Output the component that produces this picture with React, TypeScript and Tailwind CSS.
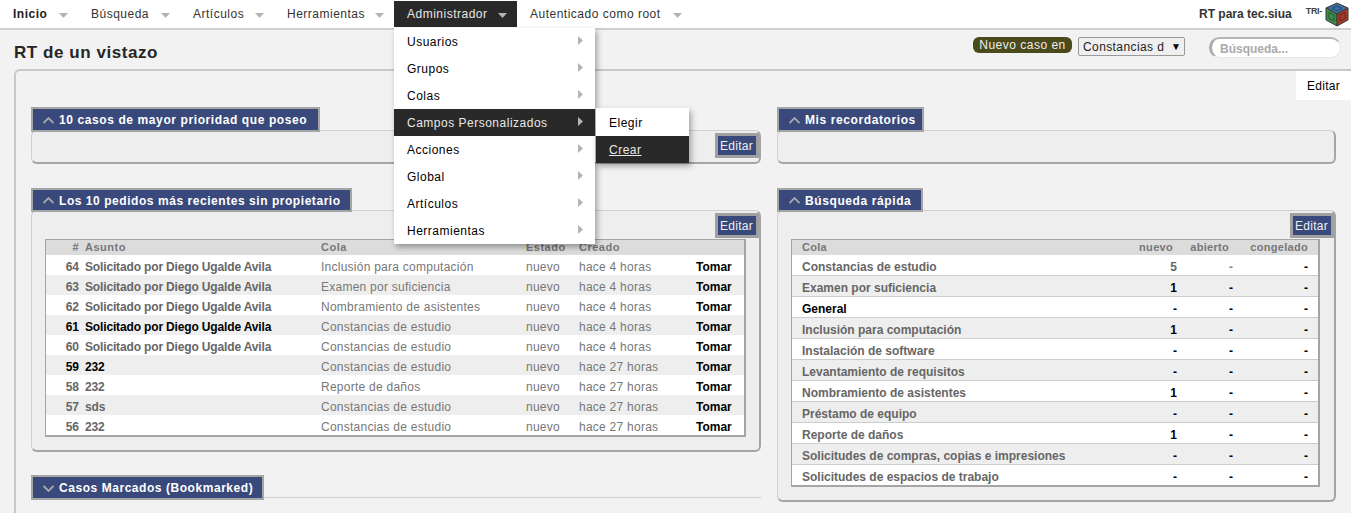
const navItems = [
  { label: 'Inicio', width: 'w-[78px]' },
  { label: 'Búsqueda', width: 'w-[102px]' },
  { label: 'Artículos', width: 'w-[94px]' },
  { label: 'Herramientas', width: 'w-[120px]' },
  { label: 'Administrador', width: 'w-[123px]' },
  { label: 'Autenticado como root', width: 'w-[175px]' },
]
const adminItems = ['Usuarios', 'Grupos', 'Colas', 'Campos Personalizados', 'Acciones', 'Global', 'Artículos', 'Herramientas']

const tickets = [
  { id: '64', subject: 'Solicitado por Diego Ugalde Avila', queue: 'Inclusión para computación', age: 'hace 4 horas', dark: false },
  { id: '63', subject: 'Solicitado por Diego Ugalde Avila', queue: 'Examen por suficiencia', age: 'hace 4 horas', dark: false },
  { id: '62', subject: 'Solicitado por Diego Ugalde Avila', queue: 'Nombramiento de asistentes', age: 'hace 4 horas', dark: false },
  { id: '61', subject: 'Solicitado por Diego Ugalde Avila', queue: 'Constancias de estudio', age: 'hace 4 horas', dark: true },
  { id: '60', subject: 'Solicitado por Diego Ugalde Avila', queue: 'Constancias de estudio', age: 'hace 4 horas', dark: false },
  { id: '59', subject: '232', queue: 'Constancias de estudio', age: 'hace 27 horas', dark: true },
  { id: '58', subject: '232', queue: 'Reporte de daños', age: 'hace 27 horas', dark: false },
  { id: '57', subject: 'sds', queue: 'Constancias de estudio', age: 'hace 27 horas', dark: false },
  { id: '56', subject: '232', queue: 'Constancias de estudio', age: 'hace 27 horas', dark: false },
]

const queues = [
  { name: 'Constancias de estudio', nuevo: '5' },
  { name: 'Examen por suficiencia', nuevo: '1' },
  { name: 'General', nuevo: '-' },
  { name: 'Inclusión para computación', nuevo: '1' },
  { name: 'Instalación de software', nuevo: '-' },
  { name: 'Levantamiento de requisitos', nuevo: '-' },
  { name: 'Nombramiento de asistentes', nuevo: '1' },
  { name: 'Préstamo de equipo', nuevo: '-' },
  { name: 'Reporte de daños', nuevo: '1' },
  { name: 'Solicitudes de compras, copias e impresiones', nuevo: '-' },
  { name: 'Solicitudes de espacios de trabajo', nuevo: '-' },
]

function Caret() {
  return (
    <svg width="9" height="5" viewBox="0 0 9 5" className="ml-auto mt-[3px] shrink-0">
      <polygon points="0,0 9,0 4.5,5" fill="#b4b4b4" />
    </svg>
  )
}

function SideArrow() {
  return (
    <svg width="5" height="9" viewBox="0 0 5 9" className="absolute left-[184px] top-[8px]">
      <polygon points="0,0 5,4.5 0,9" fill="#b4b4b4" />
    </svg>
  )
}

function Chevron({ down }: { down?: boolean }) {
  return (
    <svg width="11" height="7" viewBox="0 0 11 7" className="shrink-0">
      <polyline
        points={down ? '0.5,1 5.5,6 10.5,1' : '0.5,6 5.5,1 10.5,6'}
        fill="none"
        stroke="#a8a8a8"
        strokeWidth="1.8"
      />
    </svg>
  )
}

function AdminMenu() {
  return (
    <div className="absolute left-0 top-[27px] z-30 w-[201px] bg-white text-black shadow-[2px_3px_6px_rgba(0,0,0,0.35)]">
      {adminItems.map((item) => {
        const active = item === 'Campos Personalizados'
        return (
          <div
            key={item}
            className={`relative h-[27px] pl-[13px] leading-[29px] ${active ? 'bg-[#292929] text-[#e8e8e8]' : ''}`}
          >
            {item}
            <SideArrow />
            {active && (
              <div className="absolute left-[202px] top-[-1px] w-[93px] bg-white text-black shadow-[2px_3px_6px_rgba(0,0,0,0.35)]">
                <div className="h-[28px] pl-[13px] leading-[31px]">Elegir</div>
                <div className="h-[27px] bg-[#292929] pl-[13px] leading-[29px] text-[#e8e8e8] underline">Crear</div>
              </div>
            )}
          </div>
        )
      })}
    </div>
  )
}

function TopBar() {
  return (
    <div className="flex h-[30px] items-start border-b-2 border-[#cfcfcf] bg-white text-[12px] tracking-[0.5px] text-[#333]">
      {navItems.map((item) => {
        const active = item.label === 'Administrador'
        return (
          <div
            key={item.label}
            className={`relative mt-px flex h-[26px] items-center pl-[13px] pr-[10px] ${item.width} ${active ? 'bg-[#292929] text-[#e8e8e8]' : ''} ${item.label === 'Inicio' ? 'font-bold text-[#222]' : ''}`}
          >
            <span className="whitespace-nowrap">{item.label}</span>
            <Caret />
            {active && <AdminMenu />}
          </div>
        )
      })}
      <div className="ml-auto mr-[2px] flex h-[28px] items-center">
        <span className="text-[12px] font-bold tracking-normal text-[#333]">RT para tec.siua</span>
        <span className="ml-[14px] mt-[-4px] text-[9px] font-bold tracking-[-0.3px] text-[#444]">TRI-</span>
        <svg width="24" height="25" viewBox="0 0 24 25" className="ml-[3px]">
          <polygon points="12,1 23,6 12,12 1,6" fill="#3b6ea5" stroke="#3a3a3a" strokeWidth="1" />
          <polygon points="1,6 12,12 12,24 1,18" fill="#3c8a4a" stroke="#3a3a3a" strokeWidth="1" />
          <polygon points="23,6 12,12 12,24 23,18" fill="#a03c28" stroke="#3a3a3a" strokeWidth="1" />
          <polygon points="12,4 17,6.3 12,8.8 7,6.3" fill="none" stroke="#24466e" strokeWidth="1" />
          <polygon points="4,10.5 9,13 9,19 4,16.5" fill="none" stroke="#235a2e" strokeWidth="1" />
          <polygon points="20,10.5 15,13 15,19 20,16.5" fill="none" stroke="#6d2517" strokeWidth="1" />
        </svg>
      </div>
    </div>
  )
}

function HeaderRow() {
  return (
    <div className="flex h-[39px] items-start justify-between pl-[14px] pr-[10px]">
      <h1 className="mt-[12px] text-[17px] font-bold leading-[22px] tracking-[0.55px] text-[#262626]">RT de un vistazo</h1>
      <div className="mt-[7px] flex items-start">
        <span className="flex h-[16px] w-[99px] items-center justify-center rounded-[6px] bg-[#4a4a1c] text-[12px] tracking-[0.5px] text-[#eee]">
          Nuevo caso en
        </span>
        <div className="ml-[6px] flex h-[19px] w-[107px] items-center rounded-[2px] border border-[#999] bg-[#efefef] pl-[4px] text-[12px] tracking-[0.4px] text-[#222]">
          <span className="w-[88px] overflow-hidden whitespace-nowrap">Constancias d</span>
          <span className="text-[10px] text-black">▼</span>
        </div>
        <div className="ml-[24px] flex h-[21px] w-[132px] items-center rounded-[11px] border-l-[3px] border-t-[2px] border-r border-b border-l-[#aaa] border-t-[#b5b5b5] border-r-[#e8e8e8] border-b-[#e8e8e8] bg-white pl-[8px] pt-px text-[12px] font-bold text-[#aaa]">
          Búsqueda...
        </div>
      </div>
    </div>
  )
}

function EditButton() {
  return (
    <div className="absolute right-0 top-[2px] flex h-[25px] w-[44px] items-center justify-center border-[3px] border-[#a0a0a0] bg-[#39497b] pr-px text-[12px] tracking-[0.3px] text-[#eee]">
      Editar
    </div>
  )
}

function Widget({
  title,
  titleClass,
  down,
  edit,
  children,
}: {
  title: string
  titleClass: string
  down?: boolean
  edit?: boolean
  children?: React.ReactNode
}) {
  return (
    <div>
      <div className={`relative z-10 flex items-center gap-[5px] border-2 border-[#a5a5a5] bg-[#39497b] pl-[10px] pt-px text-[12px] font-bold text-white ${titleClass}`}>
        <Chevron down={down} />
        <span className="whitespace-nowrap">{title}</span>
      </div>
      {children !== undefined && (
        <div className="relative -mt-[2px] rounded-[6px] border-b-2 border-r-2 border-l border-t border-b-[#a5a5a5] border-r-[#a5a5a5] border-l-[#cfcfcf] border-t-[#cfcfcf] bg-[#eee]">
          {edit && <EditButton />}
          {children}
        </div>
      )}
    </div>
  )
}

function TicketsTable() {
  const cols = 'grid grid-cols-[33px_242px_205px_53px_117px_1fr]'
  return (
    <div className="mx-[13px] mb-[13px] mt-[28px] w-[701px] border-b-2 border-l border-r-2 border-t border-[#a5a5a5] bg-white">
      <div className={`${cols} h-[15px] items-center bg-[#dcdcdc] pb-[2px] text-[11px] font-bold leading-[12px] tracking-[0.5px] text-[#777]`}>
        <span className="text-right">#</span>
        <span className="pl-[6px]">Asunto</span>
        <span>Cola</span>
        <span>Estado</span>
        <span>Creado</span>
        <span />
      </div>
      {tickets.map((t, i) => (
        <div key={t.id} className={`${cols} h-[20px] items-center pt-[3px] text-[12px] ${i % 2 === 1 ? 'bg-[#eee]' : 'bg-white'}`}>
          <span className={`text-right font-bold ${t.dark ? 'text-black' : 'text-[#666]'}`}>{t.id}</span>
          <span className={`pl-[6px] font-bold tracking-[-0.15px] ${t.dark ? 'text-black' : 'text-[#666]'}`}>{t.subject}</span>
          <span className="tracking-[0.25px] text-[#777]">{t.queue}</span>
          <span className="tracking-[0.25px] text-[#777]">nuevo</span>
          <span className="tracking-[0.25px] text-[#777]">{t.age}</span>
          <span className="font-bold text-black">Tomar</span>
        </div>
      ))}
    </div>
  )
}

function QueuesTable() {
  const cols = 'grid grid-cols-[1fr_60px_56px_75px_10px]'
  return (
    <div className="mx-[13px] mb-[13px] mt-[28px] w-[529px] border-b-2 border-l border-r-2 border-t border-[#a5a5a5] bg-white">
      <div className={`${cols} h-[15px] items-center bg-[#dcdcdc] pb-[2px] text-[11px] font-bold leading-[12px] tracking-[0.3px] text-[#777]`}>
        <span className="pl-[10px]">Cola</span>
        <span className="pr-[4px] text-right">nuevo</span>
        <span className="pr-[4px] text-right">abierto</span>
        <span className="text-right">congelado</span>
        <span />
      </div>
      {queues.map((q, i) => (
        <div
          key={q.name}
          className={`${cols} h-[21px] items-center border-b border-[#ccc] pt-[3px] text-[12px] font-bold last:h-[20px] last:border-b-0 ${i % 2 === 1 ? 'bg-[#eee]' : 'bg-white'}`}
        >
          <span className={`whitespace-nowrap pl-[10px] ${q.name === 'General' ? 'text-black' : 'text-[#666]'}`}>{q.name}</span>
          <span className={`text-right ${q.nuevo === '5' ? 'text-[#666]' : 'text-black'}`}>{q.nuevo}</span>
          <span className={`text-right ${i === 0 ? 'text-[#888]' : 'text-black'}`}>-</span>
          <span className="text-right text-black">-</span>
          <span />
        </div>
      ))}
    </div>
  )
}

export default function App() {
  return (
    <div className="relative h-[513px] w-[1351px] overflow-hidden bg-[#f2f2f2] font-['Liberation_Sans',Arial,sans-serif]">
      <TopBar />
      <HeaderRow />
      <div className="relative ml-[14px] h-[500px] rounded-tl-[6px] border-l-2 border-t-2 border-[#c8c8c8] pl-[15px] pt-[36px]">
        <div className="absolute right-0 top-0 flex h-[29px] w-[55px] items-center justify-center bg-white text-[12px] tracking-[0.3px] text-black">
          Editar
        </div>
        <div className="grid grid-cols-[730px_559px] gap-x-[16px]">
          <div className="flex flex-col">
            <Widget title="10 casos de mayor prioridad que poseo" titleClass="h-[25px] w-[289px] tracking-[0.6px]" edit>
              <div className="h-[31px]" />
            </Widget>
            <div className="mt-[24px]">
              <Widget title="Los 10 pedidos más recientes sin propietario" titleClass="h-[24px] w-[321px] tracking-[0.55px]" edit>
                <TicketsTable />
              </Widget>
            </div>
            <div className="relative mt-[23px]">
              <div className="absolute left-0 right-0 top-[22px] border-t border-[#cfcfcf]" />
              <Widget title="Casos Marcados (Bookmarked)" titleClass="h-[25px] w-[233px] tracking-[0.55px]" down />
            </div>
          </div>
          <div className="flex flex-col">
            <Widget title="Mis recordatorios" titleClass="h-[25px] w-[147px] tracking-[0.6px]">
              <div className="h-[31px]" />
            </Widget>
            <div className="mt-[24px]">
              <Widget title="Búsqueda rápida" titleClass="h-[24px] w-[146px] tracking-[0.6px]" edit>
                <QueuesTable />
              </Widget>
            </div>
          </div>
        </div>
      </div>
    </div>
  )
}
